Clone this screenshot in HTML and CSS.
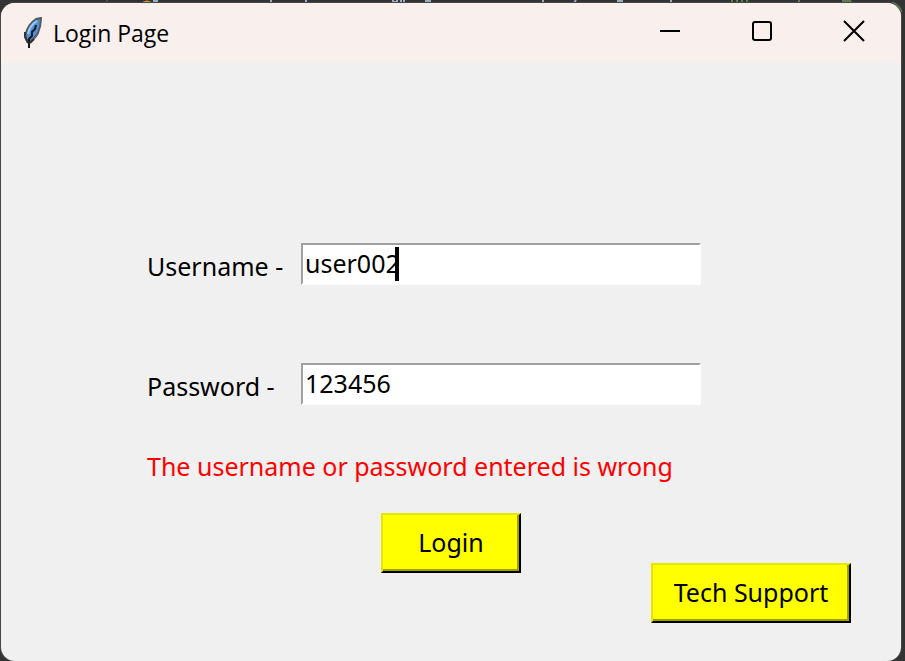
FILE: index.html
```html
<!DOCTYPE html>
<html lang="en">
<head>
<meta charset="utf-8">
<title>Login Page</title>
<link rel="stylesheet" href="styles.css">
</head>
<body>
<svg class="backdrop" height="16" aria-hidden="true">
  <path d="M107 0v3" stroke="#666" stroke-width="1"/>
  <path d="M140 4q7-7 14 0z" fill="#d99a35"/>
  <path d="M153 1h4v2M271 0v2M306 0v3M393 0v2h4v-2M401 0v2M404 0v3M425 1h5v2M543 0v2M576 0l-2 3M617 1h5v2M671 0v2" stroke="#9aacc0" stroke-width="2" fill="none"/>
  <path d="M732 0v3M737 0v3M742 0v3M747 0v3M799 0v2M843 3v-2h7l2 2" stroke="#5f7d50" stroke-width="2" fill="none"/>
  <path d="M892 3q7 3 9 9" stroke="#5f7d50" stroke-width="3" fill="none"/>
</svg>
<main class="window">
  <header class="titlebar">
    <svg class="feather" width="20" height="32" viewBox="0 0 20 32" aria-hidden="true">
      <path d="M18 1l-5 1C8 5 4 11 3 16c-1 4 0 7 3 9 4-2 7-5 9-9 2-5 3-9 3-15z" fill="#4f92dc" stroke="#5a5a5c" stroke-width="2"/>
      <path d="M14 4C9 7 6 12 5 17" stroke="#9ccbf5" stroke-width="2" fill="none"/>
      <path d="M13 8l-1 4-3 3v4l-3 3v9" stroke="#161a20" stroke-width="2" fill="none"/>
      <path d="M2 15v5l3 6M7 26l4-4" stroke="#333" stroke-width="2" fill="none"/>
    </svg>
    <h1 class="title">Login Page</h1>
    <div class="controls">
      <button class="control" type="button" aria-label="Minimize"><svg width="22" height="22" viewBox="0 0 22 22"><path d="M1 11h20"/></svg></button>
      <button class="control" type="button" aria-label="Maximize"><svg width="22" height="22" viewBox="0 0 22 22"><rect x="2" y="2" width="18" height="18" rx="2"/></svg></button>
      <button class="control" type="button" aria-label="Close"><svg width="22" height="22" viewBox="0 0 22 22"><path d="M1 1l20 20M21 1L1 21"/></svg></button>
    </div>
  </header>
  <form class="form">
    <div class="fields">
      <label for="username">Username -</label>
      <div class="entry">
        <input id="username" type="text" value="user002">
        <span class="caret"></span>
      </div>
      <label for="password">Password -</label>
      <div class="entry">
        <input id="password" type="text" value="123456">
      </div>
      <p class="error" role="alert">The username or password entered is wrong</p>
    </div>
    <div class="actions">
      <button class="btn login" type="button">Login</button>
      <button class="btn support" type="button">Tech Support</button>
    </div>
  </form>
</main>
</body>
</html>
```
FILE: styles.css
```css
* {
  box-sizing: border-box;
}

body {
  margin: 0;
  min-height: 100vh;
  display: flex;
  padding: 3px 4px 0 1px;
  background: #333;
  color: #000;
  font-family: "Noto Sans", "Open Sans", sans-serif;
}

.backdrop {
  position: absolute;
  top: 0;
  left: 0;
  width: 100%;
}

.window {
  position: relative;
  flex: 1;
  background: #f0f0f0;
  border-radius: 14px;
  box-shadow: 0 0 0 1px #484848;
  overflow: hidden;
}

.titlebar {
  display: flex;
  align-items: center;
  height: 60px;
  padding: 0 1px 0 22px;
  background: #f9f0ee;
}

.feather {
  margin-right: 10px;
}

.title {
  margin: 0;
  font-family: "Open Sans", "Noto Sans", sans-serif;
  font-size: 23px;
  font-weight: 400;
  line-height: 32px;
}

.controls {
  display: flex;
  align-self: stretch;
  margin-left: auto;
}

.control {
  width: 92px;
  padding: 0 0 4px;
  border: 0;
  background: none;
}

.control svg {
  display: block;
  margin: 0 auto;
  fill: none;
  stroke: #000;
  stroke-width: 2;
}

.form {
  padding: 180px 50px 0;
  font-size: 25px;
  line-height: 34px;
}

.fields {
  display: grid;
  grid-template-columns: 154px 1fr;
  align-items: center;
  row-gap: 78px;
  margin: 0 150px 0 96px;
}

.fields label {
  padding-top: 4px;
}

.entry {
  position: relative;
  height: 42px;
}

.entry input {
  width: 100%;
  height: 42px;
  padding: 0 2px 2px;
  border: solid #fff;
  border-width: 2px;
  border-top-color: #a0a0a0;
  border-left-color: #a0a0a0;
  border-radius: 0;
  background: #fff;
  color: #000;
  font: inherit;
  outline: 0;
}

.caret {
  position: absolute;
  top: 4px;
  left: 94px;
  width: 4px;
  height: 34px;
  background: #000;
}

.error {
  grid-column: 1 / -1;
  margin: -34px 0 0;
  color: #f00;
}

.actions {
  display: grid;
  grid-template-columns: 1fr 140px 1fr;
  align-items: start;
  margin-top: 30px;
}

.btn {
  height: 60px;
  padding: 0 0 2px;
  border: 2px solid;
  border-color: #e6e600 #000 #000 #e6e600;
  box-shadow: inset -2px -2px #a0a000;
  border-radius: 0;
  background: #ff0;
  color: #000;
  font: inherit;
}

.login {
  grid-column: 2;
}

.support {
  justify-self: end;
  width: 200px;
  margin-top: 50px;
}
```
